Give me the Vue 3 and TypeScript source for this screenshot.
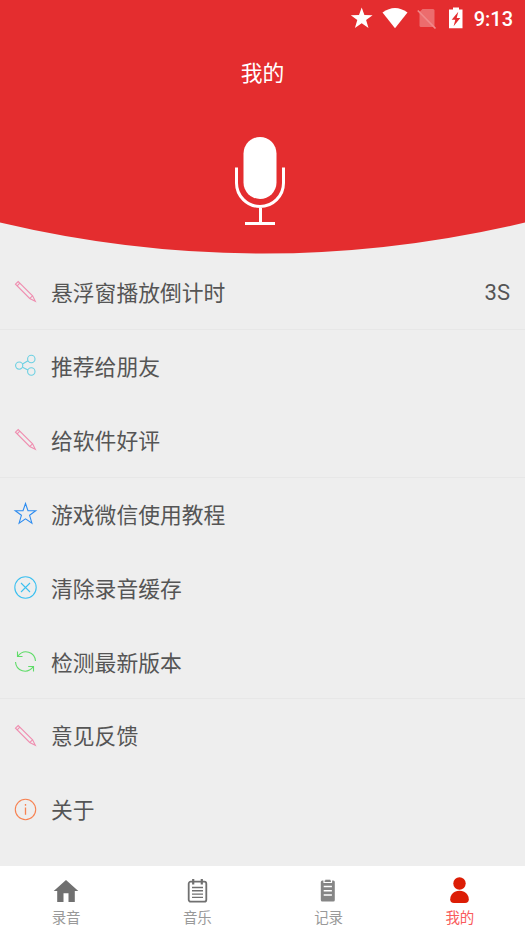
<script setup lang="ts">
type IconName = 'pencil' | 'share' | 'star' | 'clear' | 'refresh' | 'info'

interface MenuItem {
  icon: IconName
  label: string
  value?: string
  divided?: boolean
}

interface Tab {
  id: 'record' | 'music' | 'history' | 'mine'
  label: string
}

const items: MenuItem[] = [
  { icon: 'pencil', label: '悬浮窗播放倒计时', value: '3S' },
  { icon: 'share', label: '推荐给朋友', divided: true },
  { icon: 'pencil', label: '给软件好评' },
  { icon: 'star', label: '游戏微信使用教程', divided: true },
  { icon: 'clear', label: '清除录音缓存' },
  { icon: 'refresh', label: '检测最新版本' },
  { icon: 'pencil', label: '意见反馈', divided: true },
  { icon: 'info', label: '关于' },
]

const tabs: Tab[] = [
  { id: 'record', label: '录音' },
  { id: 'music', label: '音乐' },
  { id: 'history', label: '记录' },
  { id: 'mine', label: '我的' },
]

const activeTab: Tab['id'] = 'mine'
</script>

<template>
  <div class="screen">
    <header class="hero">
      <svg class="curve" viewBox="0 0 525 255" aria-hidden="true">
        <path d="M0 0H525V222.5Q262.5 284.5 0 222.5Z" fill="#e42d2f" />
      </svg>
      <div class="status">
        <svg class="status-icons" viewBox="0 0 116 36" aria-hidden="true">
          <path d="M11.7 7.5l2.700 7.500 8.200.2-6.500 4.800 2.400 8-6.800-4.700-6.800 4.700 2.400-8L.8 15.200l8.200-.2z" fill="#fff" />
          <path d="M45 28.200 32.500 12.500Q45 3.500 57.500 12.500Z" fill="#fff" />
          <path d="M72.500 9H83Q84.500 9 84.500 10.500V27H71Q69.500 27 69.500 25.500V12Z" fill="#fff" fill-opacity=".3" />
          <path d="M67.800 10.500 85.500 28.500" stroke="#f08a8b" stroke-width="1.700" />
          <path
            d="M103 7.500h6v2h3.500v18.700H99V9.500h4zM108.300 11.800l-6.600 8h3.600l-1.700 6.500 6.700-8.300h-3.600z"
            fill="#fff"
            fill-rule="evenodd"
          />
        </svg>
        <span class="clock">9:13</span>
      </div>
      <h1 class="title">我的</h1>
      <svg class="mic" viewBox="0 0 52 90" aria-hidden="true">
        <rect x="9.500" y="1" width="33" height="62" rx="16.500" fill="#fff" />
        <path d="M2.500 31.500V47A23.500 23.500 0 0 0 49.500 47V31.500M26.500 70V86" fill="none" stroke="#fff" stroke-width="3" />
        <path d="M11 87.500H41" stroke="#fff" stroke-width="3" />
      </svg>
    </header>

    <main class="menu">
      <div v-for="item in items" :key="item.label" class="row" :class="{ divided: item.divided }">
        <svg class="icon" :class="item.icon" viewBox="0 0 25 25" aria-hidden="true">
          <path
            v-if="item.icon === 'pencil'"
            d="M2.500 5.200 5.200 2.600 19.600 16.800 22.300 22.200 16.700 19.500ZM4.200 6.800 6.800 4.200M16.900 19.300 19.500 16.900"
          />
          <g v-else-if="item.icon === 'share'">
            <circle cx="6.200" cy="12.600" r="3.600" />
            <circle cx="18.300" cy="6" r="3.700" />
            <circle cx="18.300" cy="18.500" r="3.700" />
            <path d="M9.500 10.900 15 7.800M9.500 14.300 15 16.900" />
          </g>
          <path
            v-else-if="item.icon === 'star'"
            d="M12.500 2.500 15 9.800H22.700L16.600 14.300 18.900 22.200 12.500 17.800 6.100 22.200 8.400 14.300 2.300 9.800H10Z"
          />
          <g v-else-if="item.icon === 'clear'">
            <circle cx="12.500" cy="12.500" r="10.700" />
            <path d="M8 8 17 17M17 8 8 17" />
          </g>
          <path
            v-else-if="item.icon === 'refresh'"
            d="M4.500 2.500V7.500H9.500M4.700 7.300C11-.8 21.800 3 22.500 12M20.500 22.500V17.500H15.200M20.300 17.700C14 25.800 3.200 22 2.500 13"
          />
          <g v-else>
            <circle cx="12.500" cy="12.500" r="10.200" />
            <path d="M12.500 10.500V17.700M12.500 7V8.700" stroke-width="1.300" />
          </g>
        </svg>
        <span class="label">{{ item.label }}</span>
        <span v-if="item.value" class="value">{{ item.value }}</span>
      </div>
    </main>

    <nav class="tabs">
      <div v-for="tab in tabs" :key="tab.id" class="tab" :class="{ active: tab.id === activeTab }">
        <svg class="tab-icon" viewBox="0 0 28 28" aria-hidden="true">
          <path v-if="tab.id === 'record'" d="M14 3 26.300 14H22.800V25H16.500V16.200H11.500V25H5.200V14H1.700Z" fill="#707070" />
          <g v-else-if="tab.id === 'music'" fill="none" stroke="#707070">
            <rect x="5.700" y="4.700" width="17.600" height="20" rx="2" stroke-width="1.800" />
            <path d="M10.200 2V7.500M18.800 2V7.500" stroke-width="2.200" />
            <path d="M9 10.500H20M9 13.800H20M9 17.100H20M9 20.400H20" stroke-width="1.400" />
          </g>
          <g v-else-if="tab.id === 'history'">
            <rect x="6.800" y="3.500" width="14" height="21" rx="1.500" fill="#858585" />
            <path d="M10 3V5.500H17.500V3" fill="none" stroke="#fff" stroke-width="1.200" />
            <rect x="11.300" y="2.700" width="5" height="2" fill="#858585" />
            <path d="M9.700 9.500H17.900M9.700 13.800H17.900M9.700 18H17.900" stroke="#fff" stroke-width="1.500" />
          </g>
          <g v-else fill="#dc1d05">
            <circle cx="14.500" cy="6.500" r="6.200" />
            <path d="M9.900 14.700Q14.500 12.900 19.100 14.700C21.800 15.800 23.800 18.900 23.800 22.200Q23.800 26 20 26H9Q5.200 26 5.200 22.200C5.200 18.900 7.200 15.800 9.900 14.700Z" />
          </g>
        </svg>
        <span class="tab-label">{{ tab.label }}</span>
      </div>
    </nav>
  </div>
</template>

<style>
body {
  margin: 0;
}
</style>

<style scoped>
.screen {
  display: flex;
  flex-direction: column;
  height: 933px;
  overflow: hidden;
  background: #eeeeee;
  color: #555;
  font-family: Roboto, 'Noto Sans CJK SC', sans-serif;
}

.hero {
  position: relative;
  display: flex;
  flex-direction: column;
  align-items: center;
  flex: none;
  height: 255px;
  color: #fff;
}

.curve {
  position: absolute;
  top: 0;
  left: 0;
  width: 525px;
  height: 255px;
}

.status {
  position: relative;
  display: flex;
  align-items: center;
  align-self: flex-end;
  gap: 8px;
  height: 36px;
  padding-right: 12px;
}

.status-icons {
  width: 116px;
  height: 36px;
}

.clock {
  padding-top: 2px;
  font-size: 20px;
  font-weight: 500;
  line-height: 24px;
}

.title {
  position: relative;
  margin: 22px 0 0;
  font-size: 21.800px;
  font-weight: 400;
  line-height: 32px;
}

.mic {
  position: relative;
  width: 52px;
  height: 90px;
  margin: 46px 5px 0 0;
}

.menu {
  flex: 1;
}

.row {
  display: flex;
  align-items: center;
  box-sizing: border-box;
  height: 73.900px;
  padding: 0 15px 0 13px;
}

.divided {
  box-shadow: inset 0 1px #e7e7e7;
}

.icon {
  width: 25px;
  height: 25px;
  margin-right: 13px;
  fill: none;
  stroke-width: 1.100;
}

.pencil {
  stroke: #ef8eb0;
}

.share {
  stroke: #6bd0e2;
}

.star {
  stroke: #2d8cf0;
}

.clear {
  stroke: #3cc0f0;
}

.refresh {
  stroke: #5fdc68;
}

.info {
  stroke: #f78252;
}

.label {
  padding-top: 4.400px;
  font-size: 21.800px;
  line-height: 32px;
}

.value {
  margin-left: auto;
  padding-top: 2px;
  font-size: 22px;
}

.tabs {
  display: grid;
  grid-template-columns: repeat(4, 1fr);
  flex: none;
  height: 67px;
  background: #fff;
}

.tab {
  display: flex;
  flex-direction: column;
  align-items: center;
  padding-top: 11px;
  color: #999;
}

.tab.active {
  color: #f95c5c;
}

.tab-icon {
  width: 28px;
  height: 28px;
}

.tab-label {
  margin: 3px 0 0 1px;
  font-size: 14.500px;
  line-height: 22px;
}
</style>
